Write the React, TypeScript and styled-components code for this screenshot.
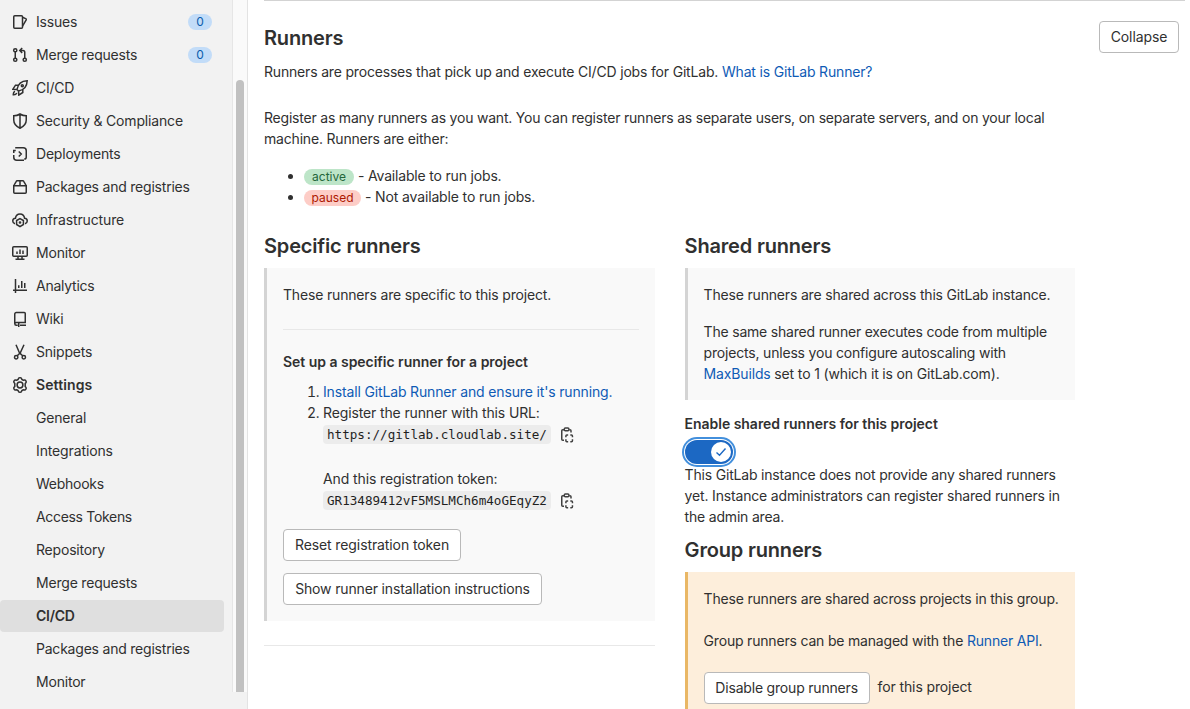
import React from 'react';
import styled, { createGlobalStyle } from 'styled-components';

const GlobalStyle = createGlobalStyle`
  *, *::before, *::after { box-sizing: border-box; }
  html, body { margin: 0; height: 100%; overflow: hidden; background: #fff; }
  body {
    font-family: Inter, "Liberation Sans", sans-serif;
    font-size: 14px;
    line-height: 21px;
    color: #303030;
    letter-spacing: -0.19px;
  }
`;

const Page = styled.div`
  display: flex;
  width: 1190px;
  height: 709px;
  overflow: hidden;
`;

const Sidebar = styled.aside`
  display: flex;
  width: 248px;
  flex: none;
  height: 709px;
  background: #f2f2f2;
  border-right: 1px solid #e3e3e3;
`;

const Nav = styled.nav`
  width: 232px;
  padding: 6px 8px 0 0;
`;

const NavItem = styled.a<{ $active?: boolean; $bold?: boolean }>`
  display: flex;
  align-items: center;
  height: 32px;
  margin-bottom: 1px;
  padding: 0 12px;
  border-radius: 4px;
  background: ${(p) => (p.$active ? '#dfdfdf' : 'transparent')};
  font-weight: ${(p) => (p.$bold || p.$active ? 600 : 400)};
`;

const IconSlot = styled.span`
  width: 16px;
  height: 16px;
  margin-right: 8px;
  flex: none;
`;

const NavLabel = styled.span<{ $track?: number }>`
  flex: 1;
  padding-bottom: 1px;
  line-height: 20px;
  white-space: nowrap;
  letter-spacing: ${(p) => p.$track ?? -0.2}px;
`;

const Count = styled.span`
  display: flex;
  align-items: center;
  justify-content: center;
  width: 24px;
  height: 16px;
  border-radius: 8px;
  background: #c2dcf8;
  color: #0b5cad;
  font-size: 12px;
  line-height: 16px;
`;

const ScrollTrack = styled.div`
  width: 15px;
  height: 692px;
  padding: 80px 3px 0;
  background: #fafafa;
  border-left: 1px solid #e6e6e6;
`;

const ScrollThumb = styled.div`
  width: 8px;
  height: 612px;
  border-radius: 4px 4px 0 0;
  background: #c1c1c1;
`;

const Main = styled.main`
  width: 921px;
  margin-left: 16px;
  flex: none;
  border-top: 1px solid #d3d3d3;
`;

const SectionHead = styled.header`
  display: flex;
  justify-content: space-between;
  align-items: flex-start;
  height: 60px;
  padding: 20px 6px 0 0;
`;

const Title = styled.h4<{ $top?: number; $track?: number }>`
  margin: ${(p) => p.$top ?? 0}px 0 0;
  height: 24px;
  font-size: 20px;
  line-height: 24px;
  font-weight: 600;
  letter-spacing: ${(p) => p.$track ?? -0.18}px;
  white-space: nowrap;
`;

const Button = styled.button<{ $width: number; $track?: number }>`
  display: flex;
  align-items: center;
  justify-content: center;
  width: ${(p) => p.$width}px;
  height: 32px;
  padding: 0 0 2px;
  border: 1px solid #b9b9b9;
  border-radius: 4px;
  background: #fff;
  color: #303030;
  font: inherit;
  letter-spacing: ${(p) => p.$track ?? -0.1}px;
  white-space: nowrap;
`;

const Line = styled.div<{ $track?: number; $strong?: boolean }>`
  height: 21px;
  white-space: nowrap;
  font-weight: ${(p) => (p.$strong ? 600 : 400)};
  letter-spacing: ${(p) => p.$track ?? (p.$strong ? -0.03 : -0.19)}px;
`;

const Paragraph = styled.div<{ $top?: number }>`
  margin-top: ${(p) => p.$top ?? 0}px;
`;

const Link = styled.a`
  color: #0f5bb5;
`;

const BulletList = styled.ul`
  margin: 16px 0 0;
  padding-left: 40px;
`;

const StepList = styled.ol`
  margin: 9px 0 0;
  padding-left: 40px;
`;

const Badge = styled.span<{ $tone: 'green' | 'red'; $width: number }>`
  display: inline-block;
  width: ${(p) => p.$width}px;
  height: 16px;
  margin: 4px 4px 0 0;
  border-radius: 8px;
  vertical-align: top;
  text-align: center;
  font-size: 12px;
  line-height: 16px;
  letter-spacing: 0;
  background: ${(p) => (p.$tone === 'green' ? '#bde5c8' : '#fdcdc7')};
  color: ${(p) => (p.$tone === 'green' ? '#24663b' : '#ae1800')};
`;

const Columns = styled.div`
  display: grid;
  grid-template-columns: 390.6px 390.4px;
  column-gap: 30px;
`;

const Panel = styled.section<{ $warm?: boolean; $height: number }>`
  height: ${(p) => p.$height}px;
  margin-top: 10px;
  padding: 16px 16px 0;
  border-left: 3px solid ${(p) => (p.$warm ? '#e9b765' : '#d4d4d4')};
  background: ${(p) => (p.$warm ? '#fdeedb' : '#f9f9f9')};
`;

const Divider = styled.hr<{ $top: number }>`
  height: 1px;
  margin: ${(p) => p.$top}px 0 0;
  border: 0;
  background: #e8e8e8;
`;

const CodeRow = styled.div`
  display: flex;
  align-items: center;
  height: 21px;
  padding-top: 1px;
`;

const Code = styled.code`
  height: 19px;
  padding: 0 4px;
  border-radius: 4px;
  background: #ececec;
  color: #1f1f1f;
  font-family: "DejaVu Sans Mono", monospace;
  font-size: 12.6px;
  line-height: 19px;
  letter-spacing: 0;
  white-space: nowrap;
`;

const CopyIcon = styled.svg`
  width: 16px;
  height: 16px;
  margin: 1px 0 0 8px;
`;

const Actions = styled.div`
  display: flex;
  flex-direction: column;
  gap: 12px;
  margin-top: 19px;
`;

const Toggle = styled.div`
  display: flex;
  justify-content: flex-end;
  align-items: center;
  width: 48px;
  height: 24px;
  margin: 6px 0 0 0.4px;
  padding-right: 2px;
  border-radius: 12px;
  background: #1c68c3;
  box-shadow: 0 0 0 1px #fff, 0 0 0 3px #428fdc;
`;

const Knob = styled.span`
  display: flex;
  align-items: center;
  justify-content: center;
  width: 20px;
  height: 20px;
  border-radius: 50%;
  background: #fff;
`;

const InlineAction = styled.div`
  display: flex;
  align-items: flex-start;
  gap: 8px;
  margin-top: 21px;
`;

const ActionNote = styled.span`
  padding-top: 4px;
  letter-spacing: -0.12px;
`;

const Svg = styled.svg`
  display: block;
  width: 16px;
  height: 16px;
  fill: none;
  stroke: #303030;
  stroke-width: 1.5;
`;

const icons: Record<string, React.ReactNode> = {
  issues: (
    <>
      <rect x="1.75" y="1.75" width="8.75" height="12.5" rx="1" />
      <path d="M10.5 3.2l3.2 1.4c.5.2.7.7.5 1.2l-3.7 6.4" />
    </>
  ),
  merge: (
    <>
      <circle cx="3.25" cy="3.25" r="1.6" />
      <circle cx="3.25" cy="12.75" r="1.6" />
      <circle cx="12.75" cy="12.75" r="1.6" />
      <path d="M3.25 4.8v6.4M12.75 11.2V5.3c0-1-.8-1.8-1.8-1.8H8.5M10.2 1L7.8 3.5l2.4 2.4" />
    </>
  ),
  rocket: (
    <>
      <path d="M5 9.5C5.8 4.5 9.5 1 15.2.8 15 6.5 11.5 10.2 6.5 11z" />
      <circle cx="10.3" cy="5.7" r="1" />
      <path d="M6.3 5.2H3.5L.9 9.2l4 .3M10.8 9.7v2.8l-4 2.6-.3-4M3 11.2c-1.4.6-1.8 2-1.7 3.5 1.5.1 2.9-.3 3.5-1.7" />
    </>
  ),
  shield: <path d="M8 1C6.2 2.1 4 2.75 1.75 2.75V7c0 4 2.5 6.5 6.25 8.2 3.75-1.7 6.25-4.2 6.25-8.2V2.75C12 2.75 9.8 2.1 8 1zM8 1v14" />,
  deployments: (
    <path d="M3.2 1.75h8.05a3 3 0 0 1 3 3v6.5c0 1.2-.8 1.8-2 1.8M12 14.25H4.75a3 3 0 0 1-3-3V9M1.75 7V4.5h2M6.75 5.5L9.25 8l-2.5 2.5" />
  ),
  package: (
    <path d="M1.75 6.75v6.5c0 .6.4 1 1 1h10.5c.6 0 1-.4 1-1v-6.5zM1.75 6.75l2.5-4.4c.2-.4.5-.6.9-.6h5.7c.4 0 .7.2.9.6l2.5 4.4M8 1.75v5" />
  ),
  infrastructure: (
    <>
      <path d="M3 11.7C1.7 11.3.75 10.3.75 9c0-1.6 1.2-2.7 2.7-2.8C3.8 3.7 5.6 2 8 2s4.2 1.7 4.55 4.2c1.5.1 2.7 1.2 2.7 2.8 0 1.3-.95 2.3-2.25 2.7" />
      <path d="M8 6.6l3.4 1.9v4L8 14.6l-3.4-2.1v-4z" />
      <circle cx="8" cy="10.5" r=".6" />
    </>
  ),
  monitor: (
    <>
      <rect x=".75" y="1.75" width="14.5" height="9.5" rx="1" />
      <path d="M6 11.5v2.5M10 11.5v2.5M3.5 14.25h9M5 6.5V9M8 4.5V9M11 5.5V9" />
    </>
  ),
  analytics: <path d="M3.5 1v14M1 12.25h14M6.75 7.2V10M9.75 3v7M12.75 5v5" />,
  wiki: (
    <path d="M13.25 11.5V2.5c0-.6-.4-1-1-1H4.25c-.8 0-1.5.7-1.5 1.5v9.5c0 1 .6 1.75 1.6 1.75h1.4M2.75 12.75c0-.8.6-1.25 1.5-1.25H14M8 14.25h6M6.75 11.5V16" />
  ),
  snippets: (
    <>
      <circle cx="4.2" cy="13.2" r="1.7" />
      <circle cx="11.8" cy="13.2" r="1.7" />
      <path d="M4 .8l3.2 7.4c.3.7.8 1.2 1.4 1.7l2.1 1.8M12 .8L8.3 8.8 5.2 11.8" />
    </>
  ),
  settings: (
    <>
      <path d="M6.6 1.3c.3-.7 2.5-.7 2.8 0l.5 1.2 1.3.7 1.5-.2c.8-.1 1.9 1.8 1.4 2.4l-.9 1.1v3l.9 1.1c.5.6-.6 2.5-1.4 2.4l-1.5-.2-1.3.7-.5 1.2c-.3.7-2.5.7-2.8 0l-.5-1.2-1.3-.7-1.5.2c-.8.1-1.9-1.8-1.4-2.4l.9-1.1v-3l-.9-1.1C1.4 4.8 2.5 2.9 3.3 3l1.5.2 1.3-.7z" />
      <circle cx="8" cy="8" r="2.9" />
    </>
  ),
};

type Entry = { label: string; icon?: string; count?: number; bold?: boolean; active?: boolean; track?: number };

const entries: Entry[] = [
  { label: 'Issues', icon: 'issues', count: 0 },
  { label: 'Merge requests', icon: 'merge', count: 0 },
  { label: 'CI/CD', icon: 'rocket', track: -0.25 },
  { label: 'Security & Compliance', icon: 'shield', track: -0.17 },
  { label: 'Deployments', icon: 'deployments' },
  { label: 'Packages and registries', icon: 'package', track: -0.215 },
  { label: 'Infrastructure', icon: 'infrastructure', track: -0.13 },
  { label: 'Monitor', icon: 'monitor' },
  { label: 'Analytics', icon: 'analytics', track: -0.24 },
  { label: 'Wiki', icon: 'wiki' },
  { label: 'Snippets', icon: 'snippets' },
  { label: 'Settings', icon: 'settings', bold: true, track: 0.1 },
  { label: 'General' },
  { label: 'Integrations', track: -0.13 },
  { label: 'Webhooks', track: -0.26 },
  { label: 'Access Tokens', track: -0.32 },
  { label: 'Repository' },
  { label: 'Merge requests' },
  { label: 'CI/CD', active: true, track: -0.25 },
  { label: 'Packages and registries', track: -0.215 },
  { label: 'Monitor' },
];

const Clipboard = () => (
  <CopyIcon viewBox="0 0 16 16" fill="none" stroke="#404040" strokeWidth="1.5">
    <path d="M5 2.75H3.75c-.6 0-1 .4-1 1v8.5c0 .6.4 1 1 1H5M10.3 2.75h.7c.6 0 1 .4 1 1V5.5" />
    <rect x="5.3" y=".9" width="4.6" height="2.8" rx="1" />
    <path d="M6.9 10.3V8.9c0-.5.4-.95.95-.95h1.3M11.3 7.95h1.2c.5 0 .95.4.95.95v1.4M13.45 12.3v1.5c0 .5-.4.95-.95.95h-1.2M9.15 14.75h-1.3c-.5 0-.95-.4-.95-.95v-1.5" />
  </CopyIcon>
);

export default function App() {
  return (
    <>
      <GlobalStyle />
      <Page>
        <Sidebar>
          <Nav>
            {entries.map((e, i) => (
              <NavItem key={i} $active={e.active} $bold={e.bold}>
                <IconSlot>{e.icon && <Svg viewBox="0 0 16 16">{icons[e.icon]}</Svg>}</IconSlot>
                <NavLabel $track={e.track}>{e.label}</NavLabel>
                {e.count !== undefined && <Count>{e.count}</Count>}
              </NavItem>
            ))}
          </Nav>
          <ScrollTrack>
            <ScrollThumb />
          </ScrollTrack>
        </Sidebar>
        <Main>
          <SectionHead>
            <Title $top={5}>Runners</Title>
            <Button $width={80}>Collapse</Button>
          </SectionHead>
          <Line $track={-0.18}>
            Runners are processes that pick up and execute CI/CD jobs for GitLab. <Link>What is GitLab Runner?</Link>
          </Line>
          <Paragraph $top={25}>
            <Line $track={-0.207}>Register as many runners as you want. You can register runners as separate users, on separate servers, and on your local</Line>
            <Line>machine. Runners are either:</Line>
          </Paragraph>
          <BulletList>
            <li><Line $track={-0.18}><Badge $tone="green" $width={50}>active</Badge>- Available to run jobs.</Line></li>
            <li><Line $track={-0.14}><Badge $tone="red" $width={57}>paused</Badge>- Not available to run jobs.</Line></li>
          </BulletList>
          <Columns>
            <div>
              <Title $top={27}>Specific runners</Title>
              <Panel $height={353}>
                <Line $track={-0.17}>These runners are specific to this project.</Line>
                <Divider $top={24} />
                <Paragraph $top={21}>
                  <Line $strong>Set up a specific runner for a project</Line>
                </Paragraph>
                <StepList>
                  <li><Line $track={-0.15}><Link>Install GitLab Runner and ensure it's running.</Link></Line></li>
                  <li>
                    <Line $track={-0.13}>Register the runner with this URL:</Line>
                    <CodeRow><Code>https://gitlab.cloudlab.site/</Code><Clipboard /></CodeRow>
                    <Paragraph $top={24}>
                      <Line $track={-0.11}>And this registration token:</Line>
                      <CodeRow><Code>GR13489412vF5MSLMCh6m4oGEqyZ2</Code><Clipboard /></CodeRow>
                    </Paragraph>
                  </li>
                </StepList>
                <Actions>
                  <Button $width={178}>Reset registration token</Button>
                  <Button $width={259} $track={-0.15}>Show runner installation instructions</Button>
                </Actions>
              </Panel>
              <Divider $top={24} />
            </div>
            <div>
              <Title $top={27}>Shared runners</Title>
              <Panel $height={132}>
                <Line $track={-0.18}>These runners are shared across this GitLab instance.</Line>
                <Paragraph $top={16}>
                  <Line $track={-0.2}>The same shared runner executes code from multiple</Line>
                  <Line>projects, unless you configure autoscaling with</Line>
                  <Line $track={-0.15}><Link>MaxBuilds</Link> set to 1 (which it is on GitLab.com).</Line>
                </Paragraph>
              </Panel>
              <Paragraph $top={13}>
                <Line $strong>Enable shared runners for this project</Line>
              </Paragraph>
              <Toggle>
                <Knob>
                  <svg width="12" height="12" viewBox="0 0 12 12" fill="none" stroke="#1c68c3" strokeWidth="1.4">
                    <path d="M1.5 6.5l3 2.7L10.5 2.5" />
                  </svg>
                </Knob>
              </Toggle>
              <Line>This GitLab instance does not provide any shared runners</Line>
              <Line $track={-0.17}>yet. Instance administrators can register shared runners in</Line>
              <Line>the admin area.</Line>
              <Title $top={11}>Group runners</Title>
              <Panel $warm $height={170}>
                <Line>These runners are shared across projects in this group.</Line>
                <Paragraph $top={21}>
                  <Line $track={-0.19}>Group runners can be managed with the <Link>Runner API</Link>.</Line>
                </Paragraph>
                <InlineAction>
                  <Button $width={166} $track={-0.19}>Disable group runners</Button>
                  <ActionNote>for this project</ActionNote>
                </InlineAction>
              </Panel>
            </div>
          </Columns>
        </Main>
      </Page>
    </>
  );
}
